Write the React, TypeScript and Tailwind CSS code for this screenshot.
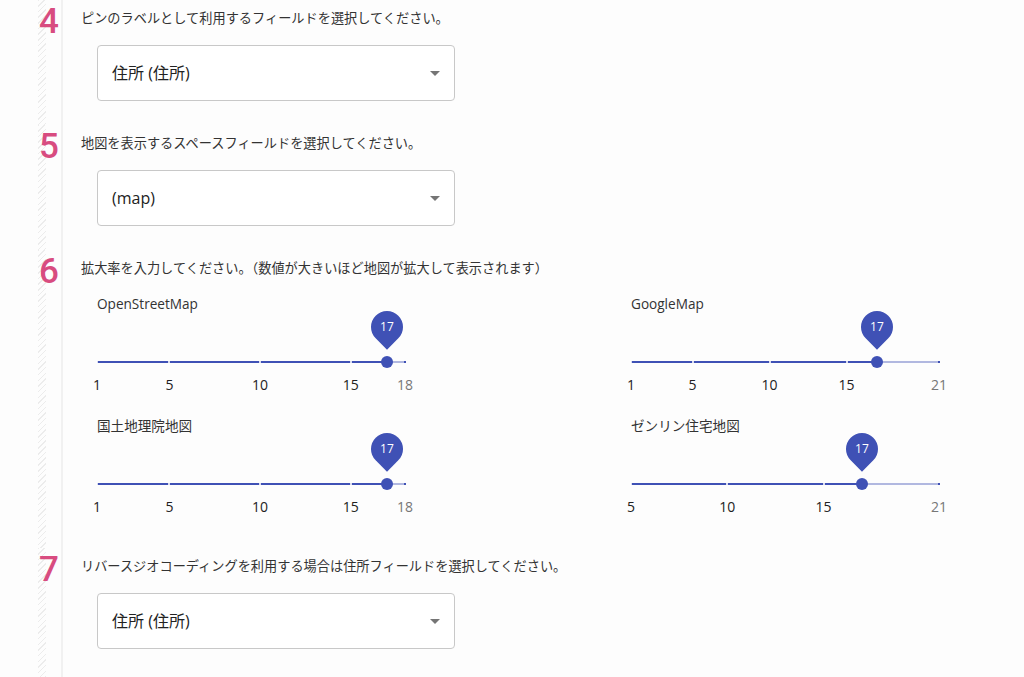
import React from "react";

const FONT = { fontFamily: '"Open Sans", "Noto Sans CJK JP", sans-serif' };

type SliderProps = { label: string; min: number; max: number; value: number; marks: number[] };

function Slider({ label, min, max, value, marks }: SliderProps) {
  const pct = (v: number) => ((v - min) / (max - min)) * 100;
  return (
    <div className="w-[308px]">
      <div className="h-[18px] text-[13.6px] leading-[18px] text-[#333]">{label}</div>
      <div className="relative h-[80px]">
        <div className="absolute left-0 right-0 top-[48px] h-[2px] bg-[#3f51b5]/40" />
        <div className="absolute left-0 top-[48px] h-[2px] bg-[#3f51b5]" style={{ width: `${pct(value)}%` }} />
        {marks.map((m) => (
          <div
            key={"m" + m}
            className={
              "absolute top-[48px] h-[2px] w-[2px] -translate-x-1/2 " +
              (m <= value ? "bg-white/80" : "bg-[#3f51b5]")
            }
            style={{ left: `${pct(m)}%` }}
          />
        ))}
        <div
          className="absolute top-[43px] h-3 w-3 -translate-x-1/2 rounded-full bg-[#3f51b5]"
          style={{ left: `${pct(value)}%` }}
        />
        <div className="absolute top-[-2px] -translate-x-1/2" style={{ left: `${pct(value)}%` }}>
          <div className="flex h-8 w-8 -rotate-45 items-center justify-center rounded-[50%_50%_50%_0] bg-[#3f51b5]">
            <span className="rotate-45 text-[12px] font-medium leading-none text-white">{value}</span>
          </div>
        </div>
        {marks.map((m) => (
          <div
            key={"l" + m}
            className={
              "absolute top-[62px] -translate-x-1/2 text-[14px] leading-[20px] " +
              (m <= value ? "text-[#222]" : "text-[#777]")
            }
            style={{ left: `${pct(m)}%` }}
          >
            {m}
          </div>
        ))}
      </div>
    </div>
  );
}

function Select({ text }: { text: string }) {
  return (
    <div className="ml-4 mt-[17px] flex h-[56px] w-[358px] items-center justify-between rounded border border-[#c8c8c8] bg-white pl-[14px] pr-[7px]">
      <span className="text-[16px] text-[#222]">{text}</span>
      <svg width="24" height="24" viewBox="0 0 24 24">
        <path d="M7 10l5 5 5-5z" fill="rgba(0,0,0,0.54)" />
      </svg>
    </div>
  );
}

function Section({
  num,
  title,
  children,
  pb,
  grow,
}: {
  num: string;
  title: string;
  children: React.ReactNode;
  pb: string;
  grow?: boolean;
}) {
  return (
    <section className={"flex " + (grow ? "flex-1" : "")}>
      <div className="w-[38px] shrink-0" />
      <div className="w-[25px] shrink-0 border-r-2 border-[#f1f1f1] bg-[repeating-linear-gradient(135deg,#ececec_0px,#ececec_1px,transparent_1px,transparent_4px)] bg-[length:8px_100%] bg-no-repeat">
        <div
          className="mt-[4px] pl-[1px] text-[35px] font-medium leading-none text-[#d84c80]"
          style={{ fontFamily: 'Roboto, "Liberation Sans", sans-serif' }}
        >
          {num}
        </div>
      </div>
      <div className={"pl-[18px] pt-[8px] " + pb}>
        <div
          className="text-[13.2px] leading-[20px] text-[#333]"
          style={{ fontFamily: '"Noto Sans CJK JP", sans-serif' }}
        >
          {title}
        </div>
        {children}
      </div>
    </section>
  );
}

export default function App() {
  return (
    <div className="flex min-h-[677px] flex-col bg-[#fdfdfd]" style={FONT}>
      <Section num="4" title="ピンのラベルとして利用するフィールドを選択してください。" pb="pb-[24px]">
        <Select text="住所 (住所)" />
      </Section>
      <Section num="5" title="地図を表示するスペースフィールドを選択してください。" pb="pb-[24px]">
        <Select text="(map)" />
      </Section>
      <Section
        num="6"
        title="拡大率を入力してください。（数値が大きいほど地図が拡大して表示されます）"
        pb="pb-[33px]"
      >
        <div className="ml-4 mt-[17px] grid grid-cols-[308px_308px] gap-x-[226px] gap-y-[24px]">
          <Slider label="OpenStreetMap" min={1} max={18} value={17} marks={[1, 5, 10, 15, 18]} />
          <Slider label="GoogleMap" min={1} max={21} value={17} marks={[1, 5, 10, 15, 21]} />
          <Slider label="国土地理院地図" min={1} max={18} value={17} marks={[1, 5, 10, 15, 18]} />
          <Slider label="ゼンリン住宅地図" min={5} max={21} value={17} marks={[5, 10, 15, 21]} />
        </div>
      </Section>
      <Section
        num="7"
        title="リバースジオコーディングを利用する場合は住所フィールドを選択してください。"
        pb="pb-[24px]"
        grow
      >
        <Select text="住所 (住所)" />
      </Section>
    </div>
  );
}
